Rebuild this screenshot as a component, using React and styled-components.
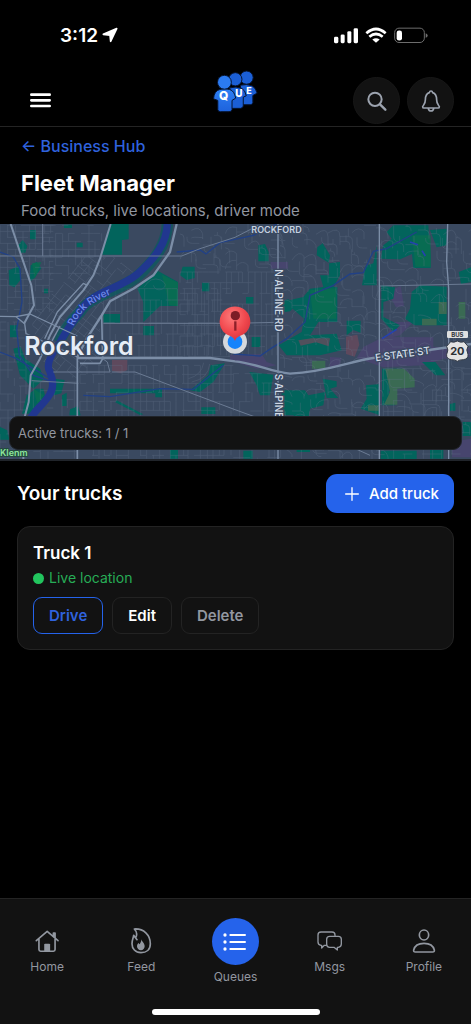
import styled, { createGlobalStyle } from 'styled-components'

const GlobalStyle = createGlobalStyle`
  * {
    box-sizing: border-box;
  }
  body {
    margin: 0;
    background: #000000;
    color: #ffffff;
    font-family: Inter, "Liberation Sans", sans-serif;
  }
  button {
    font-family: inherit;
    cursor: pointer;
  }
`

// ---------- street generator for the map ----------
const random = (seed) => {
  let s = seed
  return () => {
    s = (s * 16807) % 2147483647
    return s / 2147483647
  }
}

// blocks of a street grid, some edges are left out
const grid = (x0, y0, x1, y1, dx, dy, keep, seed) => {
  const r = random(seed)
  let d = ''
  for (let x = x0; x <= x1; x += dx) {
    const jitter = Math.round(r() * 6)
    for (let y = y0; y < y1; y += dy) {
      if (r() < keep) d += `M${x + jitter} ${y}V${Math.min(y + dy, y1)}`
    }
  }
  for (let y = y0; y <= y1; y += dy) {
    for (let x = x0; x < x1; x += dx) {
      if (r() < keep) d += `M${x} ${y}H${Math.min(x + dx, x1)}`
    }
  }
  return d
}

// winding suburb streets
const loops = (x0, y0, x1, y1, step, seed) => {
  const r = random(seed)
  let d = ''
  for (let x = x0; x < x1; x += step) {
    for (let y = y0; y < y1; y += step) {
      const a = Math.round(r() * step)
      const b = Math.round(r() * step)
      const kind = r()
      if (kind < 0.35) d += `M${x} ${y + a}q${b} ${-a} ${step} ${b - a}v${a}`
      else if (kind < 0.65) d += `M${x + a} ${y}v${b}q0 14 16 14h${a}`
      else if (kind < 0.9) d += `M${x} ${y + b}h${a}q12 0 12 12v${b}M${x + a} ${y + b}v${-a}`
    }
  }
  return d
}

const westStreets =
  grid(0, 10, 160, 270, 21, 18, 0.72, 11) +
  grid(0, 300, 90, 710, 19, 24, 0.6, 12) +
  grid(110, 10, 300, 160, 19, 24, 0.6, 13) +
  grid(310, 200, 690, 405, 17, 34, 0.74, 14) +
  grid(240, 430, 700, 710, 18, 27, 0.68, 15) +
  grid(100, 480, 232, 710, 20, 26, 0.45, 16) +
  grid(540, 150, 830, 400, 17, 32, 0.72, 17) +
  grid(700, 455, 840, 710, 17, 28, 0.6, 18) +
  grid(1150, 440, 1413, 710, 29, 32, 0.5, 19)

const eastStreets =
  loops(540, 10, 840, 140, 34, 21) +
  loops(840, 10, 1130, 440, 36, 22) +
  loops(1140, 10, 1413, 400, 38, 23) +
  loops(840, 460, 1140, 710, 36, 24) +
  loops(1150, 430, 1413, 600, 40, 25)

const FleetMap = () => (
  <MapSvg viewBox="0 6 1413 705" preserveAspectRatio="xMidYMid slice" role="img" aria-label="Map of Rockford">
    <defs>
      <radialGradient id="pin" cx="40%" cy="30%" r="75%">
        <stop offset="0" stopColor="#ff7b7b" />
        <stop offset="0.6" stopColor="#f0474d" />
        <stop offset="1" stopColor="#d5323c" />
      </radialGradient>
      <path id="river-label" d="M221 313C233 285 250 262 276 246C300 232 328 216 364 206" />
      <path id="state-label" d="M1127 418L1320 391" />
      <clipPath id="downtown">
        <path d="M250 105L480 105L420 170L340 205L300 260L300 400L230 470L130 440L90 280L200 170Z" />
      </clipPath>
    </defs>
    <rect x="0" y="0" width="1413" height="720" fill="#3a4960" />

    {/* commercial areas */}
    <g fill="#47456e">
      <path d="M690 398L785 396L800 420L830 430L770 440L690 416Z" />
      <path d="M1090 375L1150 345L1300 346V374L1410 378V405L1330 410L1270 430L1150 436L1070 408ZM1175 300L1240 300L1200 340L1160 350Z" />
      <path d="M812 120h52v20h-52zM1162 210l40-18 10 60-24 4zM1356 660l57-10v56h-57zM990 405l34 2-4 22-30 10z" />
    </g>

    {/* parks */}
    <g fill="#02645c">
      <path d="M328 6H386V52L366 54V98H306L316 56Z" />
      <path d="M90 24h18v28H90zM192 8h24v10h-24zM230 62h18v14h-18zM132 200h12v14h-12zM54 70l14-16 14 18-6 20H60z" />
      <path d="M26 145L58 132L64 170L44 196L28 190ZM92 130L110 120L124 138L104 168L88 180Z" />
      <path d="M470 145L534 180V252L480 252L430 300V240L412 200L450 165Z" />
      <path d="M548 134H584V168L560 174L540 160ZM606 182h22v26h-22zM310 276h50v26h-50zM430 312h32v28h-32z" />
      <path d="M330 500H486V526H466V514H330ZM570 505L625 460L632 430L675 424L640 480L600 510ZM604 556h42v20h-42z" />
      <path d="M30 310h22v36H30zM40 380L62 374L75 410L120 440L132 470L100 500L60 460ZM108 500L130 500L140 540L100 575H66L80 520Z" />
      <path d="M160 470l34 4-10 40-22 6zM210 562l24-10 8 28h-34zM0 615l22 10 6 28H0zM186 520l14-8v40h-14zM350 535l80 42-10 2-74-38z" />
      <path d="M775 70L795 66L806 90V118H775ZM952 76L968 64L990 100L986 122L950 100ZM738 225h22v20h-22zM755 345h26v30h-26z" />
      <path d="M1142 110L1150 70L1175 50L1160 30L1180 10H1285L1292 100V138H1240L1236 96L1200 112ZM1130 70V190H1086L1096 132L1120 124Z" />
      <path d="M987 124L1020 120V160L1000 195H1012V300H955L930 340L1010 335L1025 385L960 400H860L836 370L905 330L912 290L855 240L880 232L910 225L930 200L970 195L960 160L987 160Z" />
      <path d="M838 238l28-6 20 20-16 16-32 4zM1040 296H1082V332L1060 324L1040 340ZM1144 190L1185 196L1180 230L1150 240V285L1200 310L1180 330L1144 290Z" />
      <path d="M1235 210L1260 190L1340 194V310H1244L1215 290L1230 260ZM1290 24l50-4v50l-30 6zM1376 150l37-14v44l-30 6z" />
      <path d="M748 450L820 458L810 520L780 520L770 490ZM845 505H915L925 520L976 510L970 550L930 560L920 620L900 640V600L880 580H845ZM968 470L1010 478V494L990 500L1015 528H980Z" />
      <path d="M1098 490L1140 486V580L1082 560L1100 530ZM1146 440h60v30l-40 40 20 40h-40zM1142 686H1250V711H1142ZM1266 420h40l30 40h-30z" />
      <path d="M1388 600h25v42h-25zM1350 546l16-4v24h-16zM510 684h24v26h-24zM730 686h28v24h-28zM1290 684h40v26h-40zM890 640h40v50h-40z" />
    </g>
    <g fill="#0a6e50" opacity="0.8">
      <path d="M486 158L534 182V252L508 250ZM930 205L1008 198V290H940ZM1236 40H1292V134H1246ZM100 500l32 20-20 26zM96 124l28-4-20 50z" />
    </g>
    <g fill="#3a6a53">
      <path d="M1156 440H1212L1244 470V496L1192 500V548H1152L1170 510ZM1316 240h24v36h-24zM1376 240h20v50h-20zM1266 290h44v20h-44zM936 416h40v24h-40zM1104 550h32v16h-32z" />
    </g>
    <g fill="#6b4a5c" opacity="0.75">
      <path d="M336 414h46v30l-20 10-26-8zM1038 344l34-6 6 30-14 36-26-8zM895 355l40-6 55 0-4 24-38-12-46 10z" />
    </g>

    {/* small streets */}
    <g fill="none" stroke="#66758c" strokeWidth="2" opacity="0.45">
      <path d={westStreets} />
      <path d={eastStreets} strokeLinejoin="round" />
      <g clipPath="url(#downtown)">
        <path transform="rotate(-52 250 300)" d={grid(60, 160, 460, 480, 22, 24, 0.7, 31)} />
      </g>
      <path d="M432 196q20-34 50-22q26 14 4 28q-20 6-26-12M575 480q50-10 54-54M565 470q40-10 46-48" />
    </g>

    {/* creeks */}
    <g fill="none" stroke="#214187" strokeWidth="4">
      <path d="M0 90L40 105L60 140L66 240L50 320L58 400L100 460L160 480" />
      <path d="M530 90L600 84L618 96L660 62L760 40L830 6" />
      <path d="M1250 30L1160 80L1120 88L1090 152L1050 156L1000 190L930 220L915 300L860 350L812 380L780 402L700 396" />
      <path d="M0 390L50 410L150 470M250 520L330 524L480 500L580 502L670 430" />
      <path d="M1146 350L1190 322M1230 60l24 8M1266 86l10 16" stroke="#2442b0" strokeWidth="5" />
    </g>

    {/* river */}
    <g fill="none" stroke="#075b60" strokeWidth="34">
      <path d="M502 6C500 70 460 120 410 165C360 205 270 220 240 270C210 300 190 330 178 360" opacity="0.7" />
    </g>
    <path
      d="M502 6C500 60 470 105 410 158C360 200 275 210 245 262C220 300 200 320 180 362C150 400 136 430 150 450C162 480 160 500 150 516C130 550 105 562 92 590"
      fill="none"
      stroke="#21378f"
      strokeWidth="22"
    />

    {/* medium roads */}
    <g fill="none" stroke="#6b7b93" strokeWidth="3">
      <path d="M0 102H545L600 80L705 46L775 10M128 6V102M310 304H700L835 301" />
      <path d="M160 450H330L322 420L308 410M336 450H405L705 563L835 610L1000 650L1110 700" />
      <path d="M95 476L235 484M1140 192L1413 186" />
    </g>

    {/* main roads */}
    <g fill="none" stroke="#7c8ea7" strokeLinejoin="round">
      <path d="M32 6L60 90L94 190L102 250L72 305" strokeWidth="6" />
      <path d="M332 6L300 110L280 160L250 205L180 285L150 340L120 410L92 460L86 540L70 600V711" strokeWidth="6" />
      <path d="M262 190L250 184L172 270L134 350M0 283L48 284L90 276L232 342M48 284L74 305L78 335L200 390L232 405M180 312L150 368" strokeWidth="4" />
      <path d="M530 6L510 90L460 160L400 200L330 238L305 280L260 350L232 405" strokeWidth="7" />
      <path d="M232 402V711M305 280L308 410L300 424H240" strokeWidth="5" />
      <path d="M232 408H630L705 418C770 424 810 450 870 455C980 450 1050 418 1120 408L1413 366" strokeWidth="7" />
      <path d="M834 6V711M1138 6V711M1343 6L1340 120L1346 200V711" strokeWidth="4" />
    </g>

    {/* labels */}
    <MapText fontSize="30" fill="#6f8bea" stroke="#21378f" strokeWidth="4">
      <textPath href="#river-label">Rock River</textPath>
    </MapText>
    <MapText x="73" y="400" fontSize="75" fill="#e6edf6" stroke="#3a4960" strokeWidth="8" $weight={600}>
      Rockford
    </MapText>
    <MapText x="754" y="32" fontSize="27" fill="#c5d1e0" stroke="#3a4960" strokeWidth="6" $weight={600}>
      ROCKFORD
    </MapText>
    <MapText transform="translate(824 142) rotate(90)" fontSize="30" fill="#d3dce8" stroke="#3a4960" strokeWidth="8">
      N ALPINE RD
    </MapText>
    <MapText transform="translate(824 455) rotate(90)" fontSize="30" fill="#d3dce8" stroke="#3a4960" strokeWidth="8">
      S ALPINE
    </MapText>
    <MapText fontSize="30" fill="#d3dce8" stroke="#3a4960" strokeWidth="8">
      <textPath href="#state-label">E STATE ST</textPath>
    </MapText>
    <MapText x="0" y="702" fontSize="27" fill="#8de59c" stroke="#24493f" strokeWidth="6" $weight={600}>
      Klenm
    </MapText>

    {/* route shield */}
    <rect x="1341" y="327" width="63" height="21" rx="4" fill="#dfe0e0" />
    <MapText x="1372" y="344" fontSize="18" fill="#33363b" textAnchor="middle" $weight={700}>
      BUS
    </MapText>
    <path
      d="M1352 359q10 4 20-2q10 6 20 2l12 14q-7 10 0 24q2 14-14 16q-12 0-18 5q-6-5-18-5q-16-2-14-16q7-14 0-24z"
      fill="#e3e3e3"
      stroke="#343b46"
      strokeWidth="3"
    />
    <MapText x="1372" y="400" fontSize="33" fill="#2c2f33" textAnchor="middle" $weight={700}>
      20
    </MapText>

    {/* truck position and pin */}
    <circle cx="705" cy="359" r="36" fill="#d5d8dd" />
    <circle cx="705" cy="359" r="22" fill="#1683fb" />
    <path d="M705 357C699 338 684 344 670 329A46 46 0 1 1 740 329C726 344 711 338 705 357Z" fill="url(#pin)" />
    <circle cx="706" cy="281" r="14" fill="#7d1d26" />
    <path d="M706 298V326" stroke="#8d2029" strokeWidth="7" />
  </MapSvg>
)

const Logo = () => (
  <LogoSvg viewBox="68 30 138 130" role="img" aria-label="Que">
    <defs>
      <linearGradient id="body" x1="0" y1="0" x2="0" y2="1">
        <stop offset="0" stopColor="#2d7ff5" />
        <stop offset="1" stopColor="#1d62dc" />
      </linearGradient>
    </defs>
    <g stroke="#06142f" strokeWidth="3" fill="#1b5fd6">
      <path d="M150 76q20-5 36 2q10 5 15 22l-13 7v22q-1 6-8 6h-24z" />
      <circle cx="169" cy="53" r="20" />
      <path d="M118 84q20-6 37 2q10 5 13 22l-9 4v27q-1 6-8 7h-28z" />
      <circle cx="135" cy="58" r="20" />
      <path d="M88 89q15-5 30 0q14 4 18 26l-11 7v28q-1 6-9 6H90q-7 0-8-6v-28l-13-5q2-24 19-28z" fill="url(#body)" />
      <circle cx="102" cy="67" r="21" fill="#2b7bf2" />
    </g>
    <LogoText x="86" y="122" fontSize="36">Q</LogoText>
    <LogoText x="135" y="112" fontSize="30">U</LogoText>
    <LogoText x="168" y="104" fontSize="27">E</LogoText>
  </LogoSvg>
)

const NavIcons = {
  Home: (
    <svg viewBox="104 118 76 72" width="25" height="24" aria-hidden="true">
      <g fill="none" stroke="currentColor" strokeWidth="5" strokeLinecap="round" strokeLinejoin="round">
        <path d="M108 153L141 125L174 153M116 148V180Q116 185 121 185H160Q165 185 165 180V148M160 138V130H165V144" />
      </g>
      <path d="M132 185V165Q132 162 135 162H147Q150 162 150 165V185Z" fill="currentColor" />
    </svg>
  ),
  Feed: (
    <svg viewBox="388 116 72 78" width="24" height="26" aria-hidden="true">
      <path
        d="M404 119C432 117 452 137 452 163C452 181 440 190 424 190C407 190 397 178 397 163C397 151 401 147 402 138L408 146C413 136 412 127 404 119ZM408 146L412 151"
        fill="none"
        stroke="currentColor"
        strokeWidth="5"
        strokeLinecap="round"
        strokeLinejoin="round"
      />
      <path d="M425 150C427 158 435 161 435 171C435 178 430 183 424 183C417 183 412 178 412 171C412 167 414 164 416 161L420 165C423 160 425 156 425 150Z" fill="currentColor" />
    </svg>
  ),
  Queues: (
    <svg viewBox="0 0 72 54" width="24" height="18" aria-hidden="true">
      <g stroke="currentColor" strokeWidth="6" strokeLinecap="round">
        <path d="M22 6H66M22 27H66M22 48H66" />
      </g>
      <g fill="currentColor">
        <circle cx="6" cy="6" r="5" />
        <circle cx="6" cy="27" r="5" />
        <circle cx="6" cy="48" r="5" />
      </g>
    </svg>
  ),
  Msgs: (
    <svg viewBox="247 118 78 72" width="26" height="24" aria-hidden="true">
      <g fill="none" stroke="currentColor" strokeWidth="4" strokeLinejoin="round" strokeLinecap="round">
        <path d="M301 140V136Q301 127 292 127H259Q250 127 250 136V157Q250 166 259 167H261V175L269 167H275" />
        <path d="M285 140H311Q320 140 320 149V163Q320 172 311 173H308V181L298 173H285Q276 173 276 164V149Q276 140 285 140Z" />
      </g>
    </svg>
  ),
  Profile: (
    <svg viewBox="531 118 72 72" width="24" height="24" aria-hidden="true">
      <g fill="none" stroke="currentColor" strokeWidth="5" strokeLinejoin="round">
        <ellipse cx="567" cy="136" rx="14" ry="15" />
        <path d="M541 187Q535 187 536 181C539 168 552 161 567 161C582 161 595 168 598 181Q599 187 593 187Z" />
      </g>
    </svg>
  ),
}

const StatusBar = () => (
  <Status>
    <Clock>
      3:12
      <svg viewBox="304 81 50 48" width="16" height="16" aria-hidden="true">
        <path
          d="M350 85L331 125L329 106L308 103Z"
          fill="#ffffff"
          stroke="#ffffff"
          strokeWidth="5"
          strokeLinejoin="round"
        />
      </svg>
    </Clock>
    <svg viewBox="297 78 285 50" width="95" height="17" aria-label="Signal, Wi-Fi and battery" role="img">
      <g fill="#ffffff">
        <rect x="297" y="107" width="13" height="19" rx="4" />
        <rect x="317" y="100" width="12" height="26" rx="4" />
        <rect x="337" y="90" width="12" height="36" rx="4" />
        <rect x="356" y="81" width="13" height="45" rx="4" />
        <path d="M423 125L412 115Q423 107 434 115Z" />
      </g>
      <g fill="none" stroke="#ffffff" strokeWidth="8">
        <path d="M394 96Q423 71 452 96M403 107Q423 90 443 107" />
      </g>
      <rect x="479" y="81" width="89" height="43" rx="13" fill="none" stroke="#6d6d6d" strokeWidth="3" />
      <path d="M572 96Q578 98 578 103Q578 108 572 110Z" fill="#6d6d6d" />
      <rect x="485" y="88" width="16" height="30" rx="7" fill="#ffffff" />
    </svg>
  </Status>
)

const tabs = ['Home', 'Feed', 'Queues', 'Msgs', 'Profile']

const App = () => {
  return (
    <Page>
      <GlobalStyle />
      <StatusBar />
      <Header>
        <MenuButton aria-label="Menu">
          <svg viewBox="0 0 63 45" width="21" height="15" aria-hidden="true">
            <path d="M4 5H59M4 22H59M4 39H59" stroke="currentColor" strokeWidth="8" strokeLinecap="round" />
          </svg>
        </MenuButton>
        <Logo />
        <HeaderActions>
          <RoundButton aria-label="Search">
            <svg viewBox="396 272 60 60" width="20" height="20" aria-hidden="true">
              <g fill="none" stroke="currentColor" strokeWidth="6" strokeLinecap="round">
                <circle cx="420" cy="297" r="20" />
                <path d="M435 312L451 328" strokeWidth="7" />
              </g>
            </svg>
          </RoundButton>
          <RoundButton aria-label="Notifications">
            <svg viewBox="556 270 60 66" width="20" height="22" aria-hidden="true">
              <g fill="none" stroke="currentColor" strokeWidth="5" strokeLinejoin="round" strokeLinecap="round">
                <path d="M586 273Q582 273 581 278C571 281 569 290 569 300C569 311 564 314 561 320Q561 324 565 324H607Q611 324 611 320C608 314 603 311 603 300C603 290 601 281 591 278Q590 273 586 273ZM578 326Q580 333 586 333Q592 333 594 326" />
              </g>
            </svg>
          </RoundButton>
        </HeaderActions>
      </Header>

      <Intro>
        <BackLink href="#business-hub">← Business Hub</BackLink>
        <Title>Fleet Manager</Title>
        <Subtitle>Food trucks, live locations, driver mode</Subtitle>
      </Intro>

      <MapArea>
        <FleetMap />
        <MapBadge>Active trucks: 1 / 1</MapBadge>
      </MapArea>

      <Main>
        <SectionHead>
          <SectionTitle>Your trucks</SectionTitle>
          <AddButton>
            <svg viewBox="0 0 42 42" width="14" height="14" aria-hidden="true">
              <path d="M21 2V40M2 21H40" stroke="currentColor" strokeWidth="4" strokeLinecap="round" />
            </svg>
            Add truck
          </AddButton>
        </SectionHead>
        <TruckCard>
          <TruckName>Truck 1</TruckName>
          <LiveStatus>Live location</LiveStatus>
          <Actions>
            <ActionButton $color="#2f62dd" $border="#2563eb">Drive</ActionButton>
            <ActionButton $color="#ffffff">Edit</ActionButton>
            <ActionButton $color="#9297a0">Delete</ActionButton>
          </Actions>
        </TruckCard>
      </Main>

      <Nav>
        <Tabs>
          {tabs.map((name) => (
            <Tab key={name} href={'#' + name.toLowerCase()}>
              {name === 'Queues' ? <TabCircle>{NavIcons[name]}</TabCircle> : <TabIcon>{NavIcons[name]}</TabIcon>}
              {name}
            </Tab>
          ))}
        </Tabs>
        <HomeIndicator />
      </Nav>
    </Page>
  )
}

const Page = styled.div`
  display: flex;
  flex-direction: column;
  min-height: 100vh;
`

// status bar + header
const Status = styled.div`
  display: flex;
  justify-content: space-between;
  align-items: center;
  height: 70px;
  padding: 0 42px 0 60px;
`
const Clock = styled.div`
  display: flex;
  align-items: center;
  gap: 4px;
  font-size: 19px;
  font-weight: 600;
`
const Header = styled.header`
  display: grid;
  grid-template-columns: 1fr auto 1fr;
  align-items: end;
  height: 57px;
  padding: 0 17px 2px;
  border-bottom: 1px solid #242424;
`
const MenuButton = styled.button`
  justify-self: start;
  display: flex;
  align-items: center;
  height: 47px;
  padding: 0 13px;
  border: 0;
  background: none;
  color: #ffffff;
`
const LogoSvg = styled.svg`
  align-self: start;
  width: 46px;
  height: 43px;
`
const LogoText = styled.text`
  fill: #ffffff;
  font-weight: 800;
`
const HeaderActions = styled.div`
  display: flex;
  justify-self: end;
  gap: 7px;
`
const RoundButton = styled.button`
  display: flex;
  align-items: center;
  justify-content: center;
  width: 47px;
  height: 47px;
  padding: 0;
  border: 1px solid #171717;
  border-radius: 50%;
  background: #121212;
  color: #9ca3af;
`

// page title
const Intro = styled.div`
  display: flex;
  flex-direction: column;
  align-items: flex-start;
  padding: 8px 21px 4px;
`
const BackLink = styled.a`
  color: #2f62dd;
  font-size: 16px;
  font-weight: 500;
  line-height: 22px;
  text-decoration: none;
`
const Title = styled.h1`
  margin: 12px 0 4px;
  font-size: 22px;
  font-weight: 700;
  line-height: 28px;
`
const Subtitle = styled.p`
  margin: 0;
  color: #9297a0;
  font-size: 15px;
  line-height: 19px;
`

// map
const MapArea = styled.section`
  position: relative;
  border-bottom: 2px solid #20242a;
`
const MapSvg = styled.svg`
  display: block;
  width: 100%;
  height: 235px;
`
const MapText = styled.text`
  font-weight: ${(props) => props.$weight || 500};
  paint-order: stroke;
  stroke-linejoin: round;
`
const MapBadge = styled.div`
  position: absolute;
  left: 9px;
  right: 9px;
  bottom: 9px;
  padding: 7px 8px;
  border: 1px solid #20242a;
  border-radius: 9px;
  background: #121212;
  color: #9297a0;
  font-size: 13px;
  line-height: 18px;
`

// trucks
const Main = styled.main`
  flex: 1;
  padding: 13px 17px;
`
const SectionHead = styled.div`
  display: flex;
  justify-content: space-between;
  align-items: center;
  margin-bottom: 13px;
`
const SectionTitle = styled.h2`
  margin: 0;
  font-size: 19px;
  font-weight: 600;
`
const AddButton = styled.button`
  display: flex;
  align-items: center;
  gap: 10px;
  height: 39px;
  padding: 0 15px 0 19px;
  border: 0;
  border-radius: 11px;
  background: #2563eb;
  color: #ffffff;
  font-size: 15px;
  font-weight: 500;
`
const TruckCard = styled.article`
  padding: 15px;
  border: 1px solid #232323;
  border-radius: 13px;
  background: #121212;
`
const TruckName = styled.h3`
  margin: 0;
  font-size: 17px;
  font-weight: 600;
  line-height: 22px;
`
const LiveStatus = styled.p`
  display: flex;
  align-items: center;
  gap: 5px;
  margin: 5px 0 10px;
  color: #27ad57;
  font-size: 14px;
  line-height: 18px;
  &::before {
    content: '';
    width: 11px;
    height: 11px;
    border-radius: 50%;
    background: #22c55e;
  }
`
const Actions = styled.div`
  display: flex;
  gap: 9px;
`
const ActionButton = styled.button`
  height: 37px;
  padding: 0 15px;
  border: 1px solid ${(props) => props.$border || '#232323'};
  border-radius: 9px;
  background: #121212;
  color: ${(props) => props.$color};
  font-size: 15px;
  font-weight: 600;
`

// bottom navigation
const Nav = styled.nav`
  padding: 19px 0 9px;
  border-top: 1px solid #242424;
  background: #121212;
`
const Tabs = styled.div`
  display: grid;
  grid-template-columns: repeat(5, 1fr);
  align-items: center;
`
const Tab = styled.a`
  display: flex;
  flex-direction: column;
  align-items: center;
  color: #9297a0;
  font-size: 12px;
  line-height: 16px;
  text-decoration: none;
`
const TabIcon = styled.span`
  display: flex;
  align-items: center;
  height: 24px;
  margin-bottom: 6px;
`
const TabCircle = styled.span`
  display: flex;
  align-items: center;
  justify-content: center;
  width: 47px;
  height: 47px;
  margin-bottom: 4px;
  border-radius: 50%;
  background: #2563eb;
  color: #ffffff;
`
const HomeIndicator = styled.div`
  width: 168px;
  height: 6px;
  margin: 24px auto 0;
  border-radius: 3px;
  background: #ffffff;
`

export default App
